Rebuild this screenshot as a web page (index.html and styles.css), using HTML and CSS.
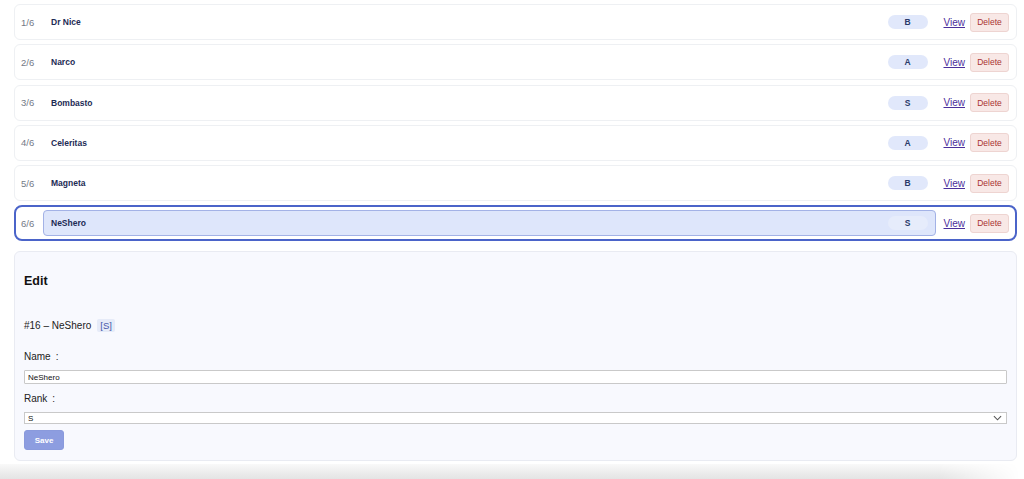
FILE: index.html
```html
<!DOCTYPE html>
<html>
<head>
<meta charset="utf-8">
<link rel="stylesheet" href="styles.css">
</head>
<body>
<div class="page">
  <ul class="list">
    <li class="row"><span class="num">1/6</span><span class="name">Dr Nice<span class="badge">B</span></span><a class="view" href="#">View</a><button class="del">Delete</button></li>
    <li class="row"><span class="num">2/6</span><span class="name">Narco<span class="badge">A</span></span><a class="view" href="#">View</a><button class="del">Delete</button></li>
    <li class="row"><span class="num">3/6</span><span class="name">Bombasto<span class="badge">S</span></span><a class="view" href="#">View</a><button class="del">Delete</button></li>
    <li class="row"><span class="num">4/6</span><span class="name">Celeritas<span class="badge">A</span></span><a class="view" href="#">View</a><button class="del">Delete</button></li>
    <li class="row"><span class="num">5/6</span><span class="name">Magneta<span class="badge">B</span></span><a class="view" href="#">View</a><button class="del">Delete</button></li>
    <li class="row selected"><span class="num">6/6</span><span class="name">NeShero<span class="badge">S</span></span><a class="view" href="#">View</a><button class="del">Delete</button></li>
  </ul>
  <section class="edit">
    <h2 class="edit-title">Edit</h2>
    <p class="hero-id">#16 – NeShero <span class="rank-chip">[S]</span></p>
    <label class="field-label">Name<span class="colon">:</span></label>
    <input class="field" type="text" value="NeShero">
    <label class="field-label">Rank<span class="colon">:</span></label>
    <div class="select">S<svg class="chev" viewBox="0 0 10 6" width="9" height="6"><path d="M1 1 L5 5 L9 1" fill="none" stroke="#555" stroke-width="1.2"/></svg></div>
    <button class="save">Save</button>
  </section>
  <div class="shade"></div>
</div>
</body>
</html>
```

FILE: styles.css
```css
* { box-sizing: border-box; }
html, body { margin: 0; padding: 0; background: #fff; overflow: hidden; }
body { font-family: "Liberation Sans", Arial, sans-serif; color: #111; }
.page { padding: 4px 7px 0 14px; height: 479px; position: relative; }
.list { list-style: none; margin: 0; padding: 0; display: flex; flex-direction: column; gap: 4.3px; }
.row {
  height: 36px; border: 1px solid #eef0f3; border-radius: 6px; background: #fff;
  display: flex; align-items: center; padding: 0 7px 0 6px;
}
.num { font-size: 9.5px; color: #737a86; width: 22px; flex: none; }
.name {
  flex: 1; display: flex; align-items: center; justify-content: space-between;
  font-size: 8.5px; font-weight: bold; color: #1d2b55; padding: 0 7px 0 7px; height: 26px;
  border: 1px solid transparent; border-radius: 4px;
}
.badge {
  width: 40px; height: 14px; border-radius: 7px; background: #e1e8fb; color: #2a3a6a;
  font-size: 8.5px; font-weight: bold; display: flex; align-items: center; justify-content: center;
}
.view { font-size: 10px; color: #4b2e9b; text-decoration: underline; margin: 0 5px 0 8px; }
.del {
  font-family: inherit; font-size: 8.5px; color: #a93232; background: #f8e8e6;
  border: 1px solid #eed4d1; border-radius: 3px; height: 19px; width: 39px; padding: 0; cursor: pointer;
}
.row.selected { border: 2px solid #4b64c9; border-radius: 8px; padding-left: 5px; padding-right: 6px; }
.row.selected .name { background: #dee6fb; border-color: #a3b2e6; height: 26px; }
.row.selected .badge { background: #e6ecfb; }
.edit {
  margin-top: 10px; background: #f8f9fe; border: 1px solid #e9ebf2; border-radius: 6px;
  padding: 22px 9px 9px 9px; height: 210px; display: flex; flex-direction: column; align-items: flex-start;
}
.edit-title { font-size: 12.5px; font-weight: bold; margin: 0 0 31px 0; color: #111; }
.hero-id { font-size: 10px; margin: 0 0 19px 0; color: #222; display: flex; align-items: center; }
.rank-chip { background: #e6ebf8; color: #4658a8; font-size: 9.5px; padding: 1px 3px; margin-left: 6px; border-radius: 2px; }
.field-label { font-size: 10px; line-height: 12px; color: #222; margin-bottom: 7px; }
.colon { margin-left: 5px; }
.field {
  width: 100%; height: 14px; font-family: inherit; font-size: 8px; border: 1px solid #c9c9c9;
  background: #fff; padding: 0 3px; margin: 0 0 9px 0; border-radius: 1px; color: #111;
}
.select {
  width: 100%; height: 12px; font-size: 8px; border: 1px solid #c9c9c9; background: #fff;
  padding: 0 3px; display: flex; align-items: center; justify-content: space-between; margin-bottom: 6px;
}
.chev { margin-right: 1px; }
.save {
  font-family: inherit; font-size: 8px; font-weight: bold; color: #fff; background: #8d9de0;
  border: 1px solid #8a9adc; border-radius: 3px; width: 40px; height: 20px; padding: 0;
}
.shade {
  margin: 3px 0 0 -14px; height: 20px; width: 1020px;
  background: linear-gradient(to bottom, #f9f9f9 0%, #e9e9e9 55%, #dedede 100%);
  -webkit-mask-image: linear-gradient(to right, #000 92%, transparent 100%);
  mask-image: linear-gradient(to right, #000 92%, transparent 100%);
}
```
